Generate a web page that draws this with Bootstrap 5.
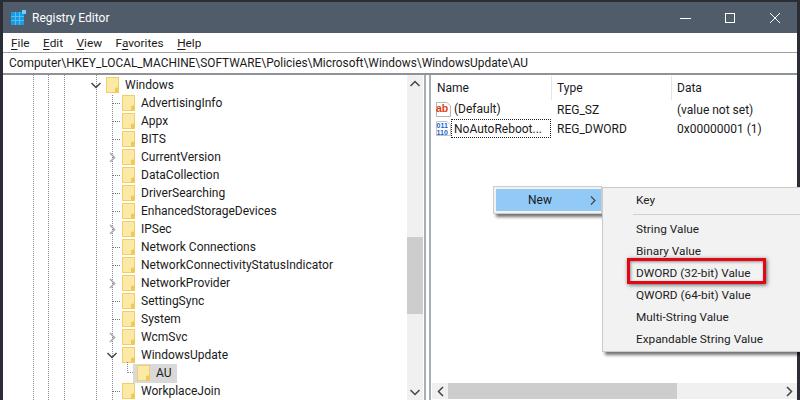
<!DOCTYPE html>
<html><head><meta charset="utf-8">
<link rel="stylesheet" href="https://cdn.jsdelivr.net/npm/bootstrap@5.3.0/dist/css/bootstrap.min.css">
<style>
html,body{margin:0;height:400px;overflow:hidden;background:#2a2d33}
body{font-family:Roboto,"Noto Sans",sans-serif;font-size:12px;color:#1a1a1a;line-height:18px}
.win{width:794px;height:398px;margin:2px 3px 0 3px;background:#fff;position:relative}
.tbar{height:31px;background:#515c6b;color:#fff;font-size:12px;padding-left:8px}
.tbar .ttl{margin-left:6px}
.wbtn{width:45px;height:31px}
.mbar{height:19px;padding-left:8px;gap:13.5px;font-size:11.800px}
.mbar u{text-underline-offset:2px}
.addr{height:23px;border-top:1px solid #a0a0a0;border-bottom:2px solid #8f9298;padding-left:6px;font-size:11.870px;line-height:20px;white-space:nowrap}
.main{height:325px}
.tree{width:421px;flex:none}
.tcol{width:401px;height:325px;position:relative;overflow:hidden;padding-top:1px}
.gd{position:absolute;top:0;bottom:0;width:0;border-left:1px dotted #8a8a8a}
.trow{height:18px;white-space:nowrap;position:relative}
.lv1{padding-left:87px}.lv2{padding-left:103px}.lv3{padding-left:130px}
.slot{width:16px;flex:none;height:18px}
.cd{margin-left:1px}.cr{margin-left:3px}
.stub{width:8px;margin-left:6px;border-top:1px dotted #777;height:0;flex:none;margin-right:2px}
.fd{flex:none;margin-right:6px}
.hl{background:#d9d9d9;height:19px;padding:0 5px 0 4px}
.aust{position:absolute;left:124px;top:-2px;width:6px;height:11px;border-left:1px dotted #8a8a8a;border-bottom:1px dotted #8a8a8a}
.vs{width:16px;height:325px;margin-left:3px;background:#f0f0f0;flex:none}
.arr{height:16px;flex:none}
.th{height:77px;margin-top:146px;background:#cdcdcd}
.split{flex:none;width:7px;border-left:2px solid #a9adb4;border-right:2px solid #a9adb4;margin-left:0}
.lst{flex:1;min-width:0}
.hd{height:25px;padding-top:1px;line-height:24px}
.cl{width:120px;flex:none;padding-left:6px;white-space:nowrap}
.cl.sp{border-left:1px solid #e5e5e5;padding-left:5px;height:24px}
.cl.wd{padding-left:5px}
.rw{height:19px;line-height:21px}
.rw .cl{line-height:21px}
.nm{padding-left:3px}
.foc{width:100px;height:19px;line-height:18px;border:1px dotted #222;padding-left:2px;margin-left:0}
.hsb{height:16px;margin:0 0 1px 1px;background:#f0f0f0}
.hth{width:229px;background:#cdcdcd}
.harr{width:16px;flex:none}
.ctx{position:absolute;background:#f2f2f2;border:1px solid #ccc;box-shadow:3px 3px 3px rgba(0,0,0,.55)}
.ctx1{left:490px;top:184px;width:109px;height:28px;padding:2px 0 2px 2px}
.nw{background:#91c9f7;padding:0 5px 0 32px;line-height:22px;height:22px}
.ctx2{left:599px;top:185px;width:205px;padding:1px 0}
.mi{padding-left:33px;white-space:nowrap;color:#222;height:22px;line-height:22px;font-size:11.800px}
.msep{margin:3px 0 3px 30px;height:1px;background:#d0d0d0}
.redbox{position:absolute;left:624px;top:256px;width:139px;height:26px;border:3px solid #e30613;box-shadow:1px 1px 4px rgba(0,0,0,.6),inset 1px 1px 3px rgba(0,0,0,.4)}
.ictxt{font-family:"Liberation Sans",sans-serif}
</style></head><body>
<svg width="0" height="0" class="d-block"><defs>
<g id="f"><rect x=".5" y=".5" width="12" height="15" fill="#fde9a6" stroke="#eecf68"/><path d="M9 15.500V11.500L10.500 10.500H12.500V15.500Z" fill="#efca55"/></g>
<path id="crv" d="M1 1L5.500 5.500L1 10" fill="none" stroke="#a6a6a6" stroke-width="1.500"/>
<path id="dnv" d="M.5 1L5 5.500L9.500 1" fill="none" stroke="#444" stroke-width="1.500"/>
</defs></svg>
<div class="win">
<div class="tbar d-flex align-items-center">
<svg width="15" height="15" viewBox="0 0 15 15"><rect y="2" width="13" height="13" fill="#119ee8"/><path d="M4.500 2V15M8.500 2V15M0 6.500H13M0 10.500H13" stroke="#62b9e6"/><rect x="11" width="4" height="4" fill="#6fd0ff"/></svg>
<span class="ttl">Registry Editor</span>
<div class="ms-auto d-flex">
<div class="wbtn d-flex align-items-center justify-content-center"><svg width="12" height="12"><path d="M1 6.500H12" stroke="#fff"/></svg></div>
<div class="wbtn d-flex align-items-center justify-content-center"><svg width="12" height="12"><rect x="1.500" y="1.500" width="9" height="9" fill="none" stroke="#fff"/></svg></div>
<div class="wbtn d-flex align-items-center justify-content-center"><svg width="12" height="12"><path d="M1 1L11 11M11 1L1 11" stroke="#fff"/></svg></div>
</div></div>
<div class="mbar d-flex align-items-center"><span><u>F</u>ile</span><span><u>E</u>dit</span><span><u>V</u>iew</span><span>F<u>a</u>vorites</span><span><u>H</u>elp</span></div>
<div class="addr">Computer\HKEY_LOCAL_MACHINE\SOFTWARE\Policies\Microsoft\Windows\WindowsUpdate\AU</div>
<div class="main d-flex">
<div class="tree d-flex">
<div class="tcol">
<div class="gd" style="left:30px"></div><div class="gd" style="left:45px"></div><div class="gd" style="left:61px"></div><div class="gd" style="left:93px"></div><div class="gd" style="left:109px;top:20px"></div>
<div class="trow lv1 d-flex align-items-center"><div class="slot d-flex align-items-center"><svg class="cd" width="10" height="7"><use href="#dnv"/></svg></div><svg class="fd" width="13" height="16"><use href="#f"/></svg><span>Windows</span></div>
<div class="trow lv2 d-flex align-items-center"><div class="slot d-flex align-items-center"><div class="stub"></div></div><svg class="fd" width="13" height="16"><use href="#f"/></svg><span>AdvertisingInfo</span></div>
<div class="trow lv2 d-flex align-items-center"><div class="slot d-flex align-items-center"><div class="stub"></div></div><svg class="fd" width="13" height="16"><use href="#f"/></svg><span>Appx</span></div>
<div class="trow lv2 d-flex align-items-center"><div class="slot d-flex align-items-center"><div class="stub"></div></div><svg class="fd" width="13" height="16"><use href="#f"/></svg><span>BITS</span></div>
<div class="trow lv2 d-flex align-items-center"><div class="slot d-flex align-items-center"><svg class="cr" width="7" height="11"><use href="#crv"/></svg></div><svg class="fd" width="13" height="16"><use href="#f"/></svg><span>CurrentVersion</span></div>
<div class="trow lv2 d-flex align-items-center"><div class="slot d-flex align-items-center"><div class="stub"></div></div><svg class="fd" width="13" height="16"><use href="#f"/></svg><span>DataCollection</span></div>
<div class="trow lv2 d-flex align-items-center"><div class="slot d-flex align-items-center"><div class="stub"></div></div><svg class="fd" width="13" height="16"><use href="#f"/></svg><span>DriverSearching</span></div>
<div class="trow lv2 d-flex align-items-center"><div class="slot d-flex align-items-center"><div class="stub"></div></div><svg class="fd" width="13" height="16"><use href="#f"/></svg><span>EnhancedStorageDevices</span></div>
<div class="trow lv2 d-flex align-items-center"><div class="slot d-flex align-items-center"><svg class="cr" width="7" height="11"><use href="#crv"/></svg></div><svg class="fd" width="13" height="16"><use href="#f"/></svg><span>IPSec</span></div>
<div class="trow lv2 d-flex align-items-center"><div class="slot d-flex align-items-center"><div class="stub"></div></div><svg class="fd" width="13" height="16"><use href="#f"/></svg><span>Network Connections</span></div>
<div class="trow lv2 d-flex align-items-center"><div class="slot d-flex align-items-center"><div class="stub"></div></div><svg class="fd" width="13" height="16"><use href="#f"/></svg><span>NetworkConnectivityStatusIndicator</span></div>
<div class="trow lv2 d-flex align-items-center"><div class="slot d-flex align-items-center"><svg class="cr" width="7" height="11"><use href="#crv"/></svg></div><svg class="fd" width="13" height="16"><use href="#f"/></svg><span>NetworkProvider</span></div>
<div class="trow lv2 d-flex align-items-center"><div class="slot d-flex align-items-center"><div class="stub"></div></div><svg class="fd" width="13" height="16"><use href="#f"/></svg><span>SettingSync</span></div>
<div class="trow lv2 d-flex align-items-center"><div class="slot d-flex align-items-center"><div class="stub"></div></div><svg class="fd" width="13" height="16"><use href="#f"/></svg><span>System</span></div>
<div class="trow lv2 d-flex align-items-center"><div class="slot d-flex align-items-center"><svg class="cr" width="7" height="11"><use href="#crv"/></svg></div><svg class="fd" width="13" height="16"><use href="#f"/></svg><span>WcmSvc</span></div>
<div class="trow lv2 d-flex align-items-center"><div class="slot d-flex align-items-center"><svg class="cd" width="10" height="7"><use href="#dnv"/></svg></div><svg class="fd" width="13" height="16"><use href="#f"/></svg><span>WindowsUpdate</span></div>
<div class="trow lv3 d-flex align-items-center"><div class="aust"></div><div class="hl d-flex align-items-center"><svg class="fd" width="13" height="16"><use href="#f"/></svg><span>AU</span></div></div>
<div class="trow lv2 d-flex align-items-center"><div class="slot d-flex align-items-center"><div class="stub"></div></div><svg class="fd" width="13" height="16"><use href="#f"/></svg><span>WorkplaceJoin</span></div>
</div>
<div class="vs d-flex flex-column">
<div class="arr d-flex align-items-center justify-content-center"><svg width="10" height="7"><path d="M.5 6L5 1.500L9.500 6" fill="none" stroke="#444" stroke-width="1.500"/></svg></div>
<div class="th"></div>
<div class="arr mt-auto d-flex align-items-center justify-content-center"><svg width="10" height="7"><use href="#dnv"/></svg></div>
</div>
</div>
<div class="split"></div>
<div class="lst d-flex flex-column">
<div class="hd d-flex"><div class="cl">Name</div><div class="cl sp">Type</div><div class="cl sp">Data</div></div>
<div class="rw d-flex"><div class="cl wd d-flex align-items-center"><svg width="15" height="15" viewBox="0 0 15 15"><path d="M.5 .5H11L14.500 4V14.500H.5Z" fill="#fff" stroke="#b5b5b5"/><text class="ictxt" x="0" y="10" font-size="10.500" font-weight="700" fill="#e0400f">ab</text></svg><span class="nm">(Default)</span></div><div class="cl">REG_SZ</div><div class="cl">(value not set)</div></div>
<div class="rw d-flex"><div class="cl wd d-flex align-items-center"><svg width="15" height="15" viewBox="0 0 15 15"><path d="M.5 .5H11L14.500 4V14.500H.5Z" fill="#fff" stroke="#c4c4c4"/><text class="ictxt" x=".5" y="6.500" font-size="7" font-weight="700" fill="#1a62cc">011</text><text class="ictxt" x=".5" y="13.500" font-size="7" font-weight="700" fill="#1a62cc">110</text></svg><span class="foc">NoAutoReboot...</span></div><div class="cl">REG_DWORD</div><div class="cl">0x00000001 (1)</div></div>
<div class="hsb mt-auto d-flex">
<div class="harr d-flex align-items-center justify-content-center"><svg width="7" height="11"><path d="M6 1L1.500 5.500L6 10" fill="none" stroke="#444" stroke-width="1.500"/></svg></div>
<div class="hth"></div>
<div class="harr ms-auto d-flex align-items-center justify-content-center"><svg width="7" height="11"><path d="M1 1L5.500 5.500L1 10" fill="none" stroke="#444" stroke-width="1.500"/></svg></div>
</div>
</div>
</div>
<div class="ctx ctx1"><div class="nw d-flex align-items-center justify-content-between"><span>New</span><svg width="6" height="9"><path d="M1 .5L5 4.500L1 8.500" fill="none" stroke="#444" stroke-width="1.200"/></svg></div></div>
<div class="ctx ctx2"><div class="mi">Key</div><div class="msep"></div><div class="mi">String Value</div><div class="mi">Binary Value</div><div class="mi">DWORD (32-bit) Value</div><div class="mi">QWORD (64-bit) Value</div><div class="mi">Multi-String Value</div><div class="mi">Expandable String Value</div></div>
<div class="redbox"></div>
</div>
</body></html>
